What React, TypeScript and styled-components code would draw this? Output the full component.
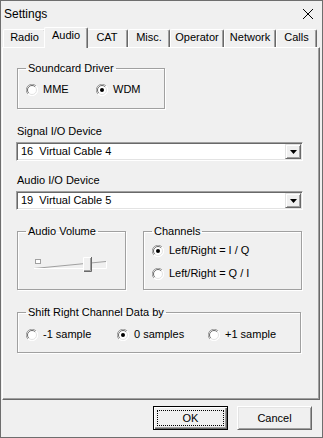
import styled, { createGlobalStyle } from 'styled-components';

const GlobalStyle = createGlobalStyle`
  html, body {
    margin: 0;
    padding: 0;
    background: #f0f0f0;
  }
  body {
    font-family: "Liberation Sans", Arial, sans-serif;
    font-size: 11px;
    color: #000;
  }
`;

const Window = styled.div`
  box-sizing: border-box;
  width: 323px;
  height: 438px;
  border: 1px solid #6e6e6e;
  background: #f0f0f0;
  display: flex;
  flex-direction: column;
`;

const TitleBar = styled.div`
  height: 26px;
  display: flex;
  align-items: center;
  justify-content: space-between;
  padding: 0 9px 0 3px;
  font-size: 12px;
`;

const TabStrip = styled.div`
  position: relative;
  z-index: 1;
  height: 20px;
  display: flex;
  align-items: flex-end;
  padding-left: 2px;
`;

const Tab = styled.div<{ $w: number; $active?: boolean }>`
  box-sizing: border-box;
  width: ${(p) => p.$w + (p.$active ? 4 : 0)}px;
  height: ${(p) => (p.$active ? 21 : 18)}px;
  margin: ${(p) => (p.$active ? '0 -2px -1px' : '0')};
  padding-top: 1px;
  display: flex;
  justify-content: center;
  line-height: 13px;
  background: #f0f0f0;
  border-top: 1px solid #fff;
  border-left: 1px solid #fff;
  border-right: 1px solid #696969;
  border-radius: 2px 2px 0 0;
  box-shadow: inset -1px 0 0 #a0a0a0;
  position: relative;
  z-index: ${(p) => (p.$active ? 2 : 1)};
`;

const Panel = styled.div`
  box-sizing: border-box;
  width: 318px;
  height: 353px;
  margin-left: 1px;
  border-top: 1px solid #fff;
  border-left: 1px solid #fff;
  border-right: 1px solid #696969;
  border-bottom: 1px solid #696969;
  box-shadow: inset -1px -1px 0 #a0a0a0;
  display: flex;
  flex-direction: column;
  align-items: flex-start;
`;

// etched frame with a caption sitting on the top line
const GroupBox = styled.fieldset<{ $w: number; $h: number; $mt?: number; $ml?: number }>`
  box-sizing: border-box;
  width: ${(p) => p.$w}px;
  height: ${(p) => p.$h}px;
  margin: ${(p) => p.$mt ?? 0}px 0 0 ${(p) => p.$ml ?? 0}px;
  padding: 0;
  min-width: 0;
  border: 1px solid #a0a0a0;
  box-shadow: 1px 1px 0 #fff, inset 1px 1px 0 #fff;
`;

const Legend = styled.legend`
  margin-left: 8px;
  padding: 0 2px;
  line-height: 13px;
`;

const GroupBody = styled.div<{ $pt: number; $pl: number; $gap?: number }>`
  padding: ${(p) => p.$pt}px 0 0 ${(p) => p.$pl}px;
  display: flex;
  flex-direction: column;
  gap: ${(p) => p.$gap ?? 0}px;
`;

const RadioRow = styled.div`
  display: flex;
`;

const RadioItem = styled.label<{ $w?: number }>`
  display: flex;
  align-items: center;
  gap: 5px;
  height: 13px;
  line-height: 13px;
  width: ${(p) => (p.$w ? `${p.$w}px` : 'auto')};
`;

const FieldLabel = styled.div<{ $mt: number }>`
  margin: ${(p) => p.$mt}px 0 0 14px;
  line-height: 13px;
`;

const Combo = styled.div<{ $mt: number }>`
  box-sizing: border-box;
  width: 287px;
  height: 19px;
  margin: ${(p) => p.$mt}px 0 0 13px;
  padding: 1px;
  display: flex;
  background: #fff;
  border: 1px solid;
  border-color: #a0a0a0 #fff #fff #a0a0a0;
  box-shadow: inset 1px 1px 0 #696969, inset -1px -1px 0 #e3e3e3;
`;

const ComboText = styled.div`
  flex: 1;
  padding-left: 3px;
  line-height: 15px;
  white-space: pre;
`;

const DropButton = styled.div`
  box-sizing: border-box;
  width: 16px;
  height: 15px;
  background: #f0f0f0;
  border: 1px solid;
  border-color: #e3e3e3 #696969 #696969 #e3e3e3;
  box-shadow: inset 1px 1px 0 #fff, inset -1px -1px 0 #a0a0a0;
  display: flex;
  align-items: center;
  justify-content: center;
`;

const GroupRow = styled.div`
  margin: 15px 0 0 14px;
  display: flex;
  gap: 17px;
`;

const SliderWrap = styled.div`
  margin: 17px 0 0 12px;
  height: 20px;
`;

const Footer = styled.div`
  display: flex;
  justify-content: flex-end;
  gap: 9px;
  padding: 6px 10px 0 0;
`;

const Button = styled.button<{ $default?: boolean }>`
  box-sizing: border-box;
  width: 75px;
  height: 24px;
  padding: 0;
  font-family: inherit;
  font-size: 11px;
  color: #000;
  background: #f0f0f0;
  border: 1px solid;
  border-color: ${(p) => (p.$default ? '#000' : '#fff #696969 #696969 #fff')};
  box-shadow: ${(p) =>
    p.$default
      ? 'inset 1px 1px 0 #fff, inset -1px -1px 0 #696969, inset -2px -2px 0 #a0a0a0'
      : 'inset 1px 1px 0 #e3e3e3, inset -1px -1px 0 #a0a0a0'};
  outline: ${(p) => (p.$default ? '1px dotted #000' : 'none')};
  outline-offset: -5px;
`;

const Radio = ({ checked }: { checked?: boolean }) => (
  <svg width="12" height="12" viewBox="0 0 12 12">
    <circle cx="6" cy="6" r="5.5" fill="#fff" />
    <path d="M1.9 10.1 A5.5 5.5 0 0 1 10.1 1.9" fill="none" stroke="#a0a0a0" />
    <path d="M10.1 1.9 A5.5 5.5 0 0 1 1.9 10.1" fill="none" stroke="#fff" />
    <path d="M2.8 9.2 A4.5 4.5 0 0 1 9.2 2.8" fill="none" stroke="#696969" />
    <path d="M9.2 2.8 A4.5 4.5 0 0 1 2.8 9.2" fill="none" stroke="#e3e3e3" />
    {checked && <circle cx="6" cy="6" r="2" fill="#000" />}
  </svg>
);

const Choice = ({ label, checked, w }: { label: string; checked?: boolean; w?: number }) => (
  <RadioItem $w={w}>
    <Radio checked={checked} />
    <span>{label}</span>
  </RadioItem>
);

const DeviceCombo = ({ value, mt }: { value: string; mt: number }) => (
  <Combo $mt={mt}>
    <ComboText>{value}</ComboText>
    <DropButton>
      <svg width="7" height="4" viewBox="0 0 7 4">
        <polygon points="0,0 7,0 3.5,4" fill="#000" />
      </svg>
    </DropButton>
  </Combo>
);

const VolumeSlider = () => (
  <svg width="80" height="20" viewBox="0 0 80 20">
    <rect x="5.5" y="4.5" width="5" height="4" fill="#fff" stroke="#a0a0a0" />
    <path d="M4 13.5 L76 6.5" stroke="#a0a0a0" fill="none" />
    <path d="M76.5 6.5 V13.5 H4" stroke="#fff" fill="none" />
    <rect x="53" y="2" width="9" height="15" fill="#f0f0f0" />
    <path d="M53.5 16.5 V2.5 H61.5" stroke="#fff" fill="none" />
    <path d="M54 16.5 H61.5 V2" stroke="#696969" fill="none" />
    <path d="M54 15.5 H60.5 V3" stroke="#a0a0a0" fill="none" />
  </svg>
);

const tabs = [
  { name: 'Radio', w: 43 },
  { name: 'Audio', w: 40, active: true },
  { name: 'CAT', w: 42 },
  { name: 'Misc.', w: 42 },
  { name: 'Operator', w: 54 },
  { name: 'Network', w: 52 },
  { name: 'Calls', w: 41 },
];

export default function App() {
  return (
    <>
      <GlobalStyle />
      <Window>
        <TitleBar>
          <span>Settings</span>
          <svg width="10" height="10" viewBox="0 0 10 10">
            <path d="M0 0 L10 10 M10 0 L0 10" stroke="#000" strokeWidth="1" />
          </svg>
        </TitleBar>
        <TabStrip>
          {tabs.map((t) => (
            <Tab key={t.name} $w={t.w} $active={t.active}>
              {t.name}
            </Tab>
          ))}
        </TabStrip>
        <Panel>
          <GroupBox $w={148} $h={47} $mt={14} $ml={14}>
            <Legend>Soundcard Driver</Legend>
            <GroupBody $pt={8} $pl={8}>
              <RadioRow>
                <Choice label="MME" w={70} />
                <Choice label="WDM" checked />
              </RadioRow>
            </GroupBody>
          </GroupBox>

          <FieldLabel $mt={16}>Signal I/O Device</FieldLabel>
          <DeviceCombo value="16  Virtual Cable 4" mt={4} />
          <FieldLabel $mt={13}>Audio I/O Device</FieldLabel>
          <DeviceCombo value="19  Virtual Cable 5" mt={4} />

          <GroupRow>
            <GroupBox $w={109} $h={65}>
              <Legend>Audio Volume</Legend>
              <SliderWrap>
                <VolumeSlider />
              </SliderWrap>
            </GroupBox>
            <GroupBox $w={159} $h={65}>
              <Legend>Channels</Legend>
              <GroupBody $pt={6} $pl={8} $gap={10}>
                <Choice label="Left/Right = I / Q" checked />
                <Choice label="Left/Right = Q / I" />
              </GroupBody>
            </GroupBox>
          </GroupRow>

          <GroupBox $w={284} $h={47} $mt={16} $ml={14}>
            <Legend>Shift Right Channel Data by</Legend>
            <GroupBody $pt={9} $pl={8}>
              <RadioRow>
                <Choice label="-1 sample" w={91} />
                <Choice label="0 samples" checked w={91} />
                <Choice label="+1 sample" />
              </RadioRow>
            </GroupBody>
          </GroupBox>
        </Panel>
        <Footer>
          <Button $default>OK</Button>
          <Button>Cancel</Button>
        </Footer>
      </Window>
    </>
  );
}
